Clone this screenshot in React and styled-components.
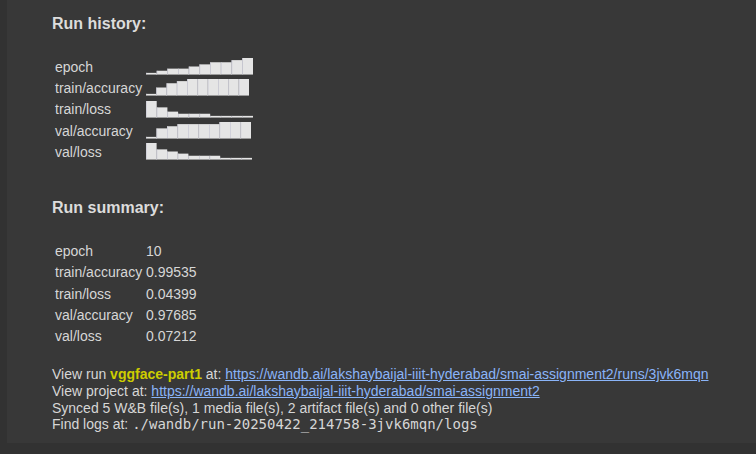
import { Fragment } from "react";
import styled, { createGlobalStyle } from "styled-components";

const GlobalStyle = createGlobalStyle`
  body {
    margin: 0;
    background: #323232;
    font-family: "Liberation Sans", Arial, sans-serif;
  }
`;

const Page = styled.div`
  width: 756px;
  height: 454px;
  padding-left: 7px;
  box-sizing: border-box;
`;

const Output = styled.div`
  background: #383838;
  height: 443px;
  padding: 14px 0 0 45px;
  box-sizing: border-box;
  color: #d6d6d6;
`;

const Heading = styled.h3`
  margin: ${(p) => p.$top || 0}px 0 0;
  font-size: 16px;
  line-height: 20px;
  font-weight: bold;
  color: #dcdcdc;
`;

const Table = styled.div`
  display: grid;
  grid-template-columns: 91px auto;
  grid-auto-rows: 21.3px;
  align-items: center;
  padding-left: 3px;
  margin-top: 22px;
  font-size: 14px;
`;

const Cell = styled.div`
  white-space: nowrap;
  display: flex;
  align-items: center;
`;

const Footer = styled.div`
  margin-top: 19px;
  font-size: 14px;
  line-height: 16.8px;
`;

const RunName = styled.strong`
  color: #cdcd00;
`;

const Link = styled.a`
  color: #8ab4f8;
  text-decoration: underline;
`;

const Mono = styled.code`
  font-family: "DejaVu Sans Mono", "Liberation Mono", monospace;
  font-size: 14px;
`;

function Sparkline({ levels, barWidth }) {
  const h = 17;
  const w = levels.length * barWidth;
  return (
    <svg width={w} height={h} viewBox={`0 0 ${w} ${h}`}>
      {levels.map((lv, i) => {
        const bh = Math.max(2, (lv * h) / 8);
        const x = i * barWidth;
        return (
          <g key={i}>
            <rect x={x} y={h - bh} width={barWidth} height={bh} fill="#e5e5e5" />
            <rect x={x} y={h - bh} width={0.7} height={bh} fill="#c9c9d6" />
            <rect x={x} y={h - 1} width={barWidth} height={1} fill="#9a9a9a" />
          </g>
        );
      })}
    </svg>
  );
}

const history = [
  { name: "epoch", levels: [1, 2, 3, 3, 4, 5, 6, 6, 7, 8], w: 10.7 },
  { name: "train/accuracy", levels: [1, 4, 6, 7, 8, 8, 8, 8, 8, 8], w: 10.3 },
  { name: "train/loss", levels: [8, 5, 3, 2, 2, 2, 1, 1, 1, 1], w: 10.7 },
  { name: "val/accuracy", levels: [1, 5, 6, 7, 7, 7, 7, 8, 8, 8], w: 10.5 },
  { name: "val/loss", levels: [8, 5, 4, 3, 2, 2, 2, 1, 1, 1], w: 10.6 },
];

const summary = [
  ["epoch", "10"],
  ["train/accuracy", "0.99535"],
  ["train/loss", "0.04399"],
  ["val/accuracy", "0.97685"],
  ["val/loss", "0.07212"],
];

export default function App() {
  return (
    <Page>
      <GlobalStyle />
      <Output>
        <Heading>Run history:</Heading>
        <Table>
          {history.map((r) => (
            <Fragment key={r.name}>
              <Cell>{r.name}</Cell>
              <Cell>
                <Sparkline levels={r.levels} barWidth={r.w} />
              </Cell>
            </Fragment>
          ))}
        </Table>
        <Heading $top={36}>Run summary:</Heading>
        <Table>
          {summary.map(([k, v]) => (
            <Fragment key={k}>
              <Cell>{k}</Cell>
              <Cell>{v}</Cell>
            </Fragment>
          ))}
        </Table>
        <Footer>
          <div>
            View run <RunName>vggface-part1</RunName> at:{" "}
            <Link href="#">
              https://wandb.ai/lakshaybaijal-iiit-hyderabad/smai-assignment2/runs/3jvk6mqn
            </Link>
          </div>
          <div>
            View project at:{" "}
            <Link href="#">https://wandb.ai/lakshaybaijal-iiit-hyderabad/smai-assignment2</Link>
          </div>
          <div>Synced 5 W&amp;B file(s), 1 media file(s), 2 artifact file(s) and 0 other file(s)</div>
          <div>
            Find logs at: <Mono>./wandb/run-20250422_214758-3jvk6mqn/logs</Mono>
          </div>
        </Footer>
      </Output>
    </Page>
  );
}
